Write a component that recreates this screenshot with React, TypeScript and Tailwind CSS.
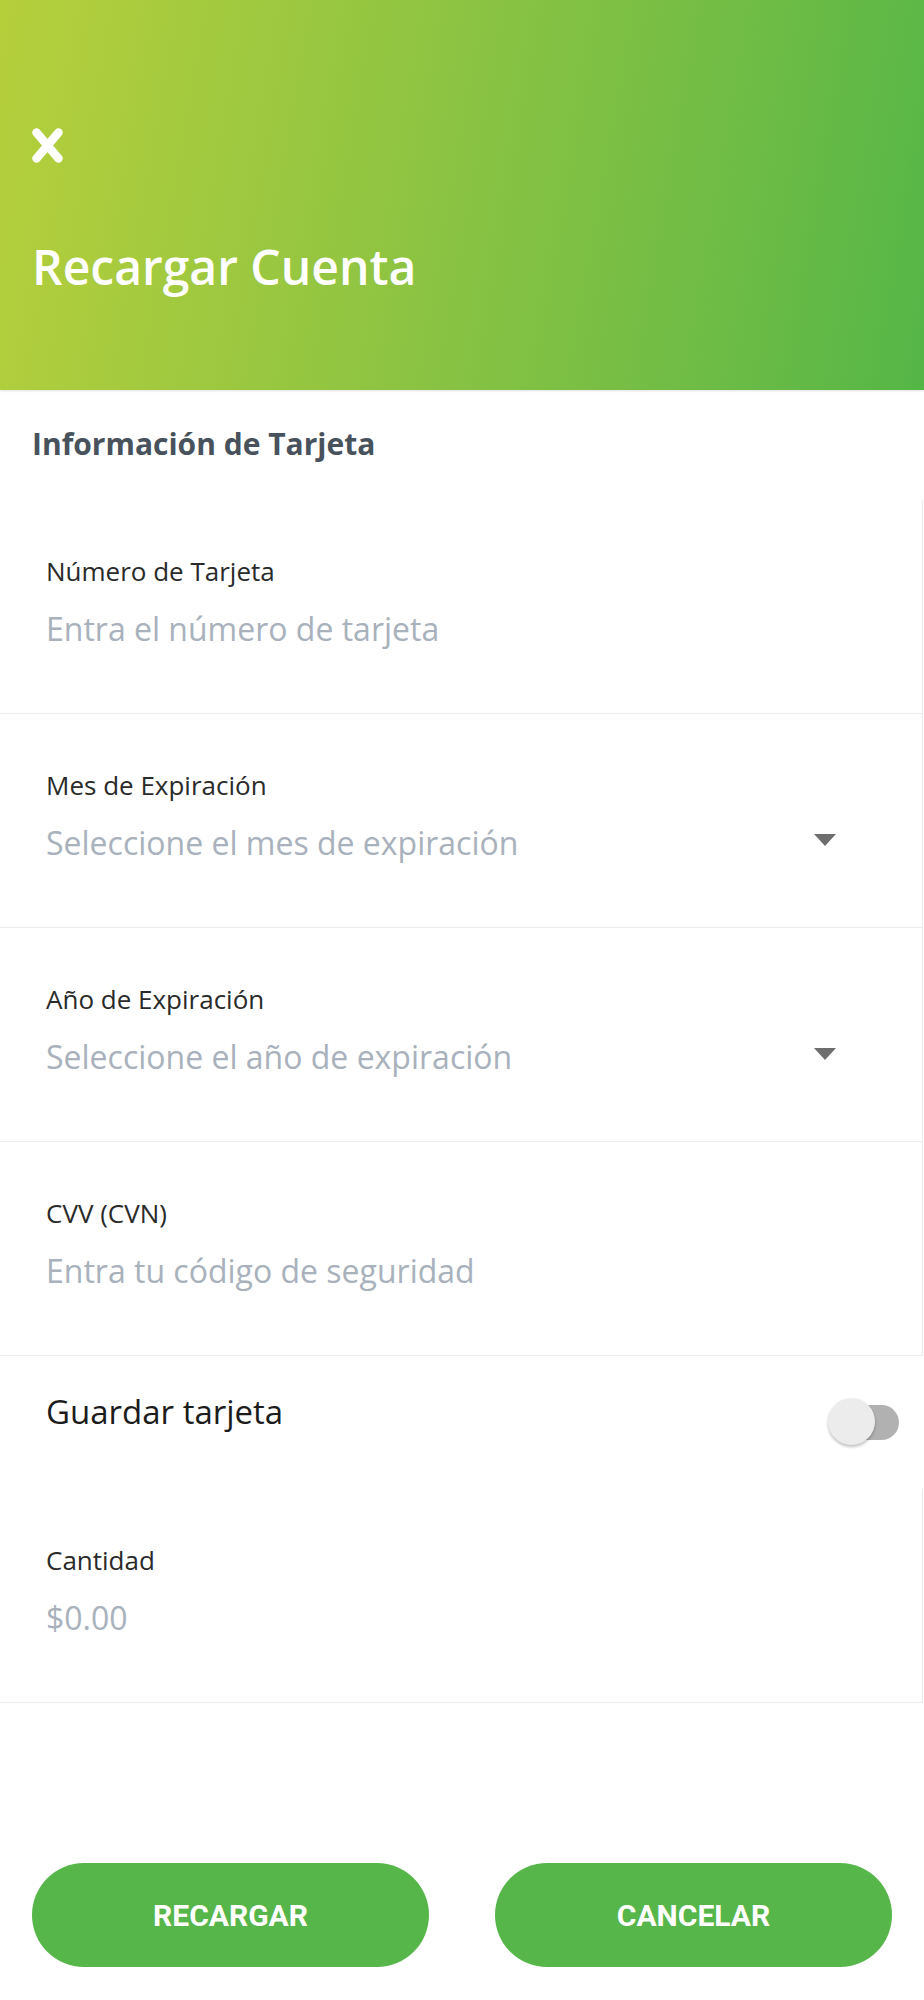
import { FC } from "react";

interface FieldRowProps {
  label: string;
  placeholder: string;
  select?: boolean;
}

const FieldRow: FC<FieldRowProps> = ({ label, placeholder, select }) => (
  <div className="h-[214px] w-[923px] border-r border-b border-[#ececec] pl-[46px] pt-[58px]">
    <p className="text-[26px] leading-none text-[#2a2a2a]">{label}</p>
    <div className="mt-[29px] flex items-center justify-between pr-[86px]">
      <span className="text-[32px] leading-none text-[#a8b1bc]">{placeholder}</span>
      {select && (
        <svg width="22" height="12" viewBox="0 0 22 12" className="mt-[-6px]">
          <path d="M0 0 H22 L11 12 Z" fill="#6e6e6e" />
        </svg>
      )}
    </div>
  </div>
);

const Toggle: FC = () => (
  <div className="relative h-[49px] w-[71px]">
    <div className="absolute right-0 top-[7px] h-[35px] w-[58px] rounded-full bg-[#b1b1b1]" />
    <div className="absolute left-0 top-0 h-[47px] w-[47px] rounded-full bg-[#ececec] shadow-[0_2px_3px_rgba(0,0,0,0.25)]" />
  </div>
);

export default function App() {
  return (
    <div className="flex min-h-[2000px] w-[924px] flex-col bg-white font-['Open_Sans',sans-serif]">
      {/* header */}
      <header className="h-[390px] bg-linear-100 from-[#b6cf3b] to-[#54b647] pl-[32px] pt-[128px] shadow-[0_1px_2px_rgba(0,0,0,0.12)]">
        <svg width="31" height="35" viewBox="0 0 31 35">
          <path
            d="M4.5 4.5 L26.5 30.5 M26.5 4.5 L4.5 30.5"
            stroke="white"
            strokeWidth="8.5"
            strokeLinecap="round"
          />
        </svg>
        <h1 className="mt-[80px] text-[48px] font-semibold leading-none text-white">
          Recargar Cuenta
        </h1>
      </header>

      <h2 className="mt-[39px] pl-[32px] text-[30px] font-bold leading-none text-[#48525c]">
        Información de Tarjeta
      </h2>

      <div className="mt-[41px]">
        <FieldRow label="Número de Tarjeta" placeholder="Entra el número de tarjeta" />
        <FieldRow
          label="Mes de Expiración"
          placeholder="Seleccione el mes de expiración"
          select
        />
        <FieldRow
          label="Año de Expiración"
          placeholder="Seleccione el año de expiración"
          select
        />
        <FieldRow label="CVV (CVN)" placeholder="Entra tu código de seguridad" />

        <div className="flex h-[133px] items-start justify-between pl-[46px] pr-[25px]">
          <span className="mt-[39px] text-[33px] leading-none text-[#1c1c1c]">
            Guardar tarjeta
          </span>
          <div className="mt-[42px]">
            <Toggle />
          </div>
        </div>

        <FieldRow label="Cantidad" placeholder="$0.00" />
      </div>

      <div className="mt-[160px] flex justify-between px-[32px] font-['Roboto',sans-serif]">
        <button className="h-[104px] w-[397px] rounded-full bg-[#56b64a] text-[30px] font-bold text-white">
          RECARGAR
        </button>
        <button className="h-[104px] w-[397px] rounded-full bg-[#56b64a] text-[30px] font-bold text-white">
          CANCELAR
        </button>
      </div>
    </div>
  );
}
